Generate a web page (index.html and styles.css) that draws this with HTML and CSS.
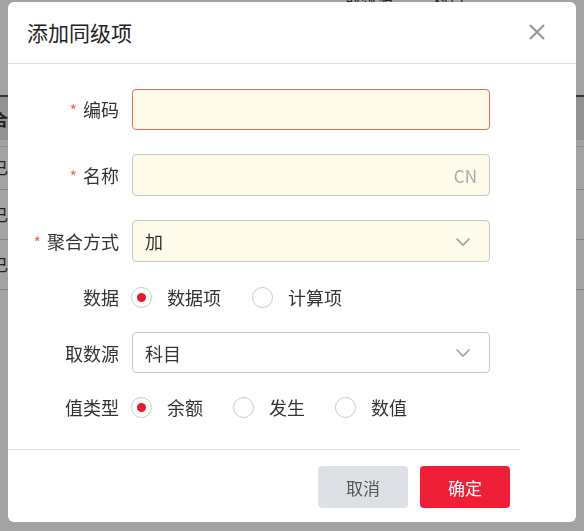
FILE: index.html
```html
<!DOCTYPE html>
<html lang="zh-CN">
<head>
<meta charset="utf-8">
<title>添加同级项</title>
<link rel="stylesheet" href="styles.css">
</head>
<body>
<div class="page">
  <div class="topline"><span>取数源</span><span>科目</span></div>
  <table class="grid">
    <thead><tr><th class="c1">合</th><th>名称</th><th class="cr">"</th></tr></thead>
    <tbody>
      <tr><td class="c1">已</td><td>行</td><td class="cr">"</td></tr>
      <tr><td class="c1">已</td><td>行</td><td class="cr">"</td></tr>
      <tr><td class="c1">已</td><td>行</td><td class="cr">-</td></tr>
    </tbody>
  </table>
</div>
<div class="overlay"></div>
<div class="modal">
  <div class="modal-header">
    <div class="modal-title">添加同级项</div>
    <svg class="close" width="18" height="18" viewBox="0 0 18 18"><path d="M2 2 L16 16 M16 2 L2 16" stroke="#999" stroke-width="2.2" fill="none"/></svg>
  </div>
  <div class="modal-body">
    <div class="row h41">
      <label class="lbl"><span class="req">*</span>编码</label>
      <div class="input focus"></div>
    </div>
    <div class="row">
      <label class="lbl"><span class="req">*</span>名称</label>
      <div class="input"><span class="suffix">CN</span></div>
    </div>
    <div class="row">
      <label class="lbl"><span class="req">*</span>聚合方式</label>
      <div class="input"><span class="val">加</span><svg class="chev" width="16" height="10" viewBox="0 0 16 10"><path d="M1.5 1.5 L8 8 L14.5 1.5" stroke="#a0a0a0" stroke-width="1.6" fill="none"/></svg></div>
    </div>
    <div class="row radio-row">
      <label class="lbl">数据</label>
      <div class="radios">
        <span class="radio on"></span><span class="rtext w1">数据项</span>
        <span class="radio"></span><span class="rtext">计算项</span>
      </div>
    </div>
    <div class="row h41">
      <label class="lbl">取数源</label>
      <div class="input white"><span class="val">科目</span><svg class="chev" width="16" height="10" viewBox="0 0 16 10"><path d="M1.5 1.5 L8 8 L14.5 1.5" stroke="#a0a0a0" stroke-width="1.6" fill="none"/></svg></div>
    </div>
    <div class="row radio-row last">
      <label class="lbl">值类型</label>
      <div class="radios">
        <span class="radio on"></span><span class="rtext w2">余额</span>
        <span class="radio"></span><span class="rtext w2">发生</span>
        <span class="radio"></span><span class="rtext">数值</span>
      </div>
    </div>
  </div>
  <div class="modal-footer">
    <button class="btn cancel">取消</button>
    <button class="btn ok">确定</button>
  </div>
</div>
</body>
</html>
```
FILE: styles.css
```css
* { box-sizing: border-box; }
html, body { margin: 0; padding: 0; }
body {
  width: 584px;
  height: 531px;
  overflow: hidden;
  font-family: "Noto Sans CJK SC", "Noto Sans", sans-serif;
  color: #333;
  background: #fff;
}
.page { position: relative; }
.topline {
  height: 12px;
  margin-top: -8px;
  padding-left: 345px;
  display: flex;
  gap: 40px;
  font-size: 16px;
  line-height: 16px;
  color: #333;
}
.grid {
  margin-top: 91px;
  width: 600px;
  margin-left: -8px;
  border-collapse: collapse;
  font-size: 16px;
}
.grid thead tr { background: #e4e4e6; border-top: 2px solid #555; }
.grid th { height: 47px; text-align: left; font-weight: bold; padding: 0; }
.grid td { height: 50px; padding: 0; border-bottom: 1px solid #cfcfcf; }
.grid tbody tr:first-child td { border-top: 6px solid #fff; box-shadow: inset 0 1px 0 #ddd; height: 46px; }
.grid .c1 { width: 20px; padding-left: 0; }
.grid .cr { width: 30px; text-align: left; padding-left: 0; }
.overlay {
  position: fixed;
  inset: 0;
  background: rgba(0, 0, 0, 0.36);
}
.modal {
  position: fixed;
  left: 8px;
  top: 2px;
  width: 568px;
  height: 520px;
  background: #fff;
  border-radius: 6px;
  display: flex;
  flex-direction: column;
}
.modal-header {
  height: 62px;
  border-bottom: 1px solid #ddd;
  display: flex;
  align-items: center;
  justify-content: space-between;
  padding: 0 30px 0 19px;
  flex: none;
}
.modal-title {
  font-size: 21px;
  color: #222;
  padding-bottom: 1px;
}
.close { display: block; margin-top: -2px; }
.modal-body {
  padding: 25px 0 0 0;
  display: flex;
  flex-direction: column;
  gap: 24px;
  flex: 1;
}
.row {
  display: flex;
  align-items: center;
  height: 42px;
  flex: none;
}
.row.h41 { height: 41px; }
.row.radio-row { height: 22px; }
.row.last { margin-top: -1px; }
.lbl {
  width: 111px;
  text-align: right;
  font-size: 18px;
  line-height: 22px;
  color: #333;
  flex: none;
}
.req {
  color: #ee6a4f;
  margin-right: 6px;
  font-size: 16px;
}
.input {
  margin-left: 13px;
  width: 358px;
  height: 100%;
  border: 1px solid #c8c8c8;
  border-radius: 4px;
  background: #fffbea;
  display: flex;
  align-items: center;
  padding: 0 12px;
  font-size: 18px;
  color: #333;
}
.input.focus { border-color: #de7253; }
.input.white { background: #fff; }
.val { flex: 1; }
.suffix { margin-left: auto; color: #aaa; font-size: 17px; }
.chev { margin-right: 6px; margin-top: 1px; }
.radios {
  margin-left: 12px;
  display: flex;
  align-items: center;
  font-size: 18px;
  line-height: 22px;
  color: #333;
}
.radio {
  width: 21px;
  height: 21px;
  border: 1px solid #c8c8c8;
  border-radius: 50%;
  display: flex;
  align-items: center;
  justify-content: center;
  flex: none;
}
.radio.on::after {
  content: "";
  width: 9px;
  height: 9px;
  border-radius: 50%;
  background: #e8192c;
}
.rtext { margin-left: 15px; }
.rtext.w1 { margin-right: 31px; }
.rtext.w2 { margin-right: 30px; }
.modal-footer {
  border-top: 1px solid #ddd;
  margin-right: 56px;
  height: 73px;
  flex: none;
  display: flex;
  justify-content: flex-end;
  align-items: flex-start;
  padding: 16px 10px 0 0;
  gap: 12px;
}
.btn {
  width: 90px;
  height: 42px;
  border: none;
  border-radius: 4px;
  font-family: "Noto Sans CJK SC", "Noto Sans", sans-serif;
  font-size: 17px;
}
.btn.cancel { background: #dde1e6; color: #555; }
.btn.ok { background: #ee1f36; color: #fff; }
```
